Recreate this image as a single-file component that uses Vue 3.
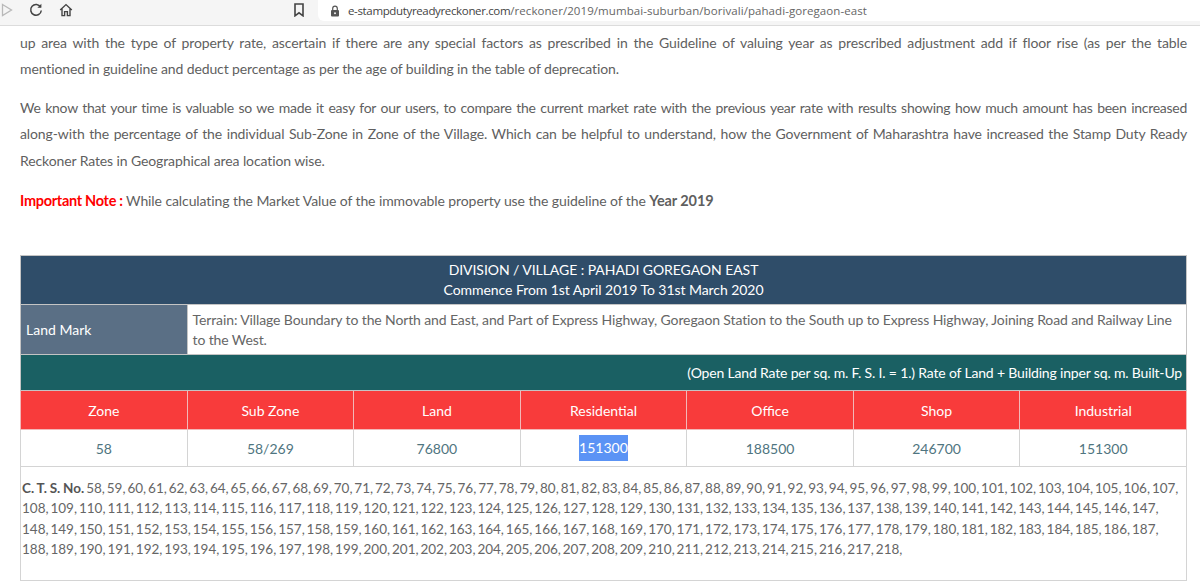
<template>
  <div class="page">
    <div class="toolbar">
      <div class="nav">
        <svg class="back" width="12" height="14" viewBox="0 0 12 14"><path d="M1.5 1.5 L10.5 7 L1.5 12.5 Z" fill="none" stroke="#b9b9b9" stroke-width="1.3" /></svg>
        <svg class="reload" width="14" height="14" viewBox="0 0 14 14"><path d="M11.6 4.2 A5.3 5.3 0 1 0 12.3 7.5" fill="none" stroke="#444" stroke-width="1.5" /><path d="M8.4 4.8 H12.4 V0.8 Z" fill="#444" /></svg>
        <svg class="home" width="14" height="14" viewBox="0 0 14 14"><path d="M1.2 7 L7 1.6 L12.8 7 M3 5.6 V12.6 H5.6 V8.6 H8.4 V12.6 H11 V5.6" fill="none" stroke="#444" stroke-width="1.4" /></svg>
      </div>
      <svg class="bookmark" width="10" height="14" viewBox="0 0 10 14"><path d="M1 1 H9 V12.8 L5 9.8 L1 12.8 Z" fill="none" stroke="#444" stroke-width="1.6" /></svg>
      <div class="url">
        <svg class="lock" width="10" height="12" viewBox="0 0 10 12"><path d="M2.7 5 V3.4 A2.3 2.3 0 0 1 7.3 3.4 V5" fill="none" stroke="#555" stroke-width="1.2" /><rect x="1" y="5" width="8" height="6.4" rx="1" fill="#555" /><circle cx="5" cy="8.2" r="1" fill="#f2f2f2" /></svg>
        <span class="host">e-stampdutyreadyreckoner.com</span><span class="path">/reckoner/2019/mumbai-suburban/borivali/pahadi-goregaon-east</span>
      </div>
    </div>

    <div class="content">
      <p class="para first">
        <span class="just">up area with the type of property rate, ascertain if there are any special factors as prescribed in the Guideline of valuing year as prescribed adjustment add if floor rise (as per the table</span>
        mentioned in guideline and deduct percentage as per the age of building in the table of deprecation.
      </p>
      <p class="para second">
        <span class="just tight">We know that your time is valuable so we made it easy for our users, to compare the current market rate with the previous year rate with results showing how much amount has been increased</span>
        <span class="just">along-with the percentage of the individual Sub-Zone in Zone of the Village. Which can be helpful to understand, how the Government of Maharashtra have increased the Stamp Duty Ready</span>
        Reckoner Rates in Geographical area location wise.
      </p>
      <p class="note"><b class="red">Important Note :</b> While calculating the Market Value of the immovable property use the guideline of the <b class="year">Year 2019</b></p>

      <table class="rates">
        <tbody>
          <tr class="head">
            <td colspan="7">DIVISION / VILLAGE : PAHADI GOREGAON EAST<br />Commence From 1st April 2019 To 31st March 2020</td>
          </tr>
          <tr class="mark">
            <td class="mark-label">Land Mark</td>
            <td colspan="6" class="mark-text">Terrain: Village Boundary to the North and East, and Part of Express Highway, Goregaon Station to the South up to Express Highway, Joining Road and Railway Line to the West.</td>
          </tr>
          <tr class="rate-note">
            <td colspan="7">(Open Land Rate per sq. m. F. S. I. = 1.) Rate of Land + Building inper sq. m. Built-Up</td>
          </tr>
          <tr class="cols">
            <td v-for="c in columns" :key="c">{{ c }}</td>
          </tr>
          <tr class="vals">
            <td v-for="(v, i) in values" :key="i"><span :class="{ selected: i === 3 }">{{ v }}</span></td>
          </tr>
          <tr class="cts">
            <td colspan="7"><b class="cts-label">C. T. S. No.</b> {{ ctsList }},</td>
          </tr>
        </tbody>
      </table>
    </div>
  </div>
</template>

<script setup>
const columns = ["Zone", "Sub Zone", "Land", "Residential", "Office", "Shop", "Industrial"];
const values = ["58", "58/269", "76800", "151300", "188500", "246700", "151300"];

const nums = [];
for (let n = 58; n <= 218; n++) nums.push(n);
const ctsList = nums.join(", ");
</script>

<style>
html,
body {
  margin: 0;
  background: #fff;
  overflow: hidden;
}
</style>

<style scoped>
.page {
  width: 1200px;
  height: 582px;
  overflow: hidden;
  font-family: Lato, "Open Sans", sans-serif;
  font-size: 14px;
  color: #5f5f5f;
}

.toolbar {
  display: flex;
  align-items: flex-start;
  height: 25px;
  background: #f5f5f5;
  border-bottom: 1px solid #dcdcdc;
}

.nav {
  display: flex;
  align-items: center;
  gap: 16px;
  width: 294px;
  padding: 3px 0 0 1px;
  box-sizing: border-box;
}

.bookmark {
  margin: 3px 14px 0 0;
}

.url {
  display: flex;
  align-items: center;
  flex: 1;
  height: 21px;
  padding-left: 12px;
  background: #fff;
  border-bottom-left-radius: 6px;
  font-family: "Open Sans", sans-serif;
  font-size: 11.5px;
  white-space: nowrap;
}

.lock {
  margin-right: 8px;
}

.host {
  color: #444;
  letter-spacing: -0.35px;
}

.path {
  color: #666;
  letter-spacing: 0.07px;
}

.content {
  padding: 0 13px 0 20px;
}

.para {
  margin: 0;
  line-height: 26.4px;
  letter-spacing: -0.11px;
}

.just {
  display: block;
  text-align: justify;
  text-align-last: justify;
}

.tight {
  letter-spacing: -0.28px;
}

.first {
  padding-top: 4px;
}

.second {
  padding-top: 12px;
}

.note {
  margin: 13px 0 0;
  line-height: 28px;
  letter-spacing: -0.09px;
}

.red {
  color: #f00;
  font-size: 14.5px;
  font-weight: 700;
  letter-spacing: -0.3px;
}

.year {
  font-size: 14.5px;
}

.rates {
  width: 1167px;
  margin-top: 40px;
  border-collapse: collapse;
  table-layout: fixed;
}

.rates td {
  padding: 0;
  border: 1px solid #d4d4d4;
  text-align: center;
}

.head td {
  height: 48px;
  background: #2f4d69;
  border-color: #c4c4c4;
  color: #fff;
  line-height: 20px;
  letter-spacing: -0.06px;
}

.mark-label.mark-label {
  height: 49px;
  padding-left: 5px;
  background: #5a6f85;
  border-color: #c4c4c4;
  color: #fff;
  text-align: left;
}

.mark-text.mark-text {
  padding: 0 5px;
  border-color: #c4c4c4;
  line-height: 20px;
  letter-spacing: -0.12px;
  color: #666;
  text-align: left;
}

.rate-note td {
  height: 36px;
  padding: 0 4px 1px 0;
  box-sizing: border-box;
  background: #1a6063;
  border-color: #c4c4c4;
  color: #fff;
  letter-spacing: -0.17px;
  text-align: right;
}

.cols td {
  height: 38px;
  background: #f83b3b;
  border-color: #f2b8b8;
  color: #fff;
}

.vals td {
  height: 36px;
  color: #4f7580;
}

.selected {
  display: inline-block;
  line-height: 26px;
  background: #5b93f5;
  color: #fff;
}

.cts td {
  height: 114px;
  padding: 11px 0 0 1px;
  box-sizing: border-box;
  vertical-align: top;
  text-align: left;
  font-size: 13.5px;
  line-height: 20.3px;
  word-spacing: -1.55px;
  color: #666;
}

.cts-label {
  word-spacing: -0.5px;
  color: #555;
}
</style>
